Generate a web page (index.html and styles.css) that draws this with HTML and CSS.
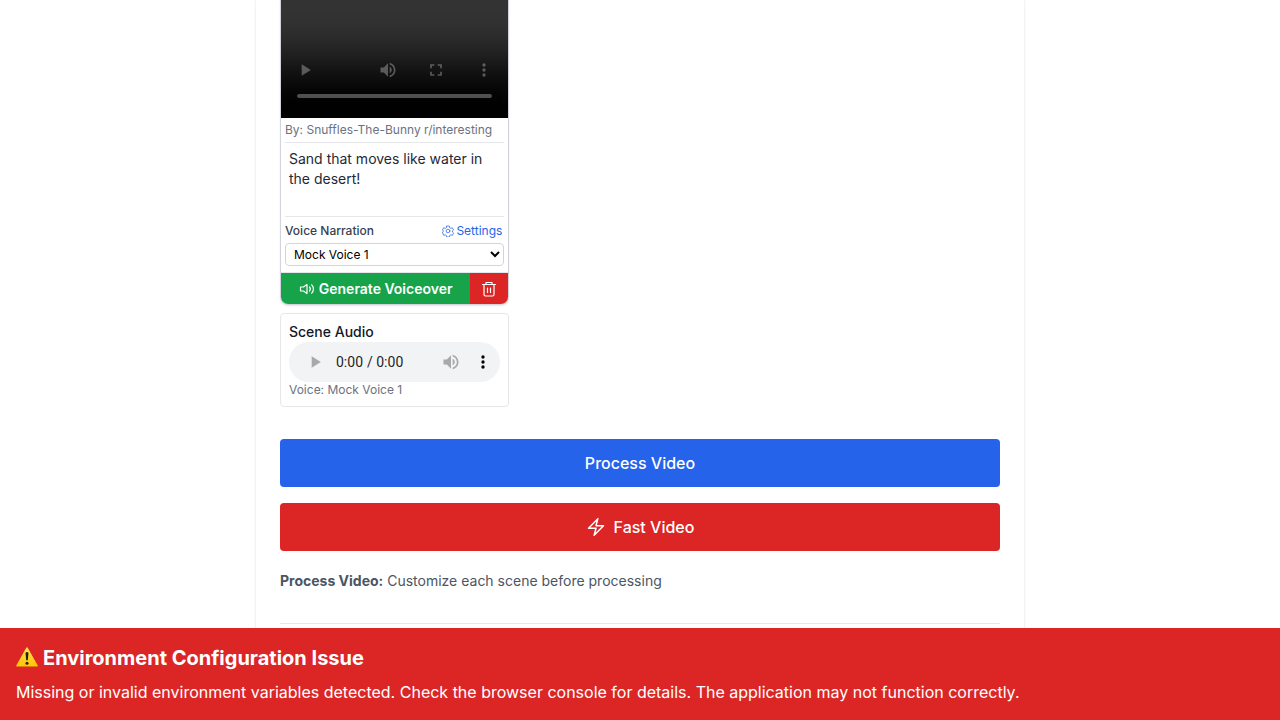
FILE: index.html
```html
<!DOCTYPE html>
<html lang="en">
<head>
<meta charset="utf-8">
<meta name="viewport" content="width=device-width, initial-scale=1">
<title>Video scenes</title>
<link rel="stylesheet" href="styles.css">
</head>
<body>
<main class="panel">
  <div class="scenes">
    <div class="scene">
      <article class="card">
        <div class="media"><video class="video" controls></video></div>
        <div class="credit">By: Snuffles-The-Bunny r/interesting</div>
        <textarea class="caption" aria-label="Scene text">Sand that moves like water in the desert!</textarea>
        <div class="voice">
          <div class="voice-head">
            <label for="voice">Voice Narration</label>
            <button class="settings" type="button">
              <svg class="icon-sm" viewBox="0 0 24 24" aria-hidden="true"><path d="M9.4 2h5.2l.7 3.2 2.2 1.3 3.1-1 2.6 4.5-2.4 2.2v-.4 2.2l2.4 2.2-2.6 4.5-3.1-1-2.2 1.3-.7 3.2H9.4l-.7-3.2-2.2-1.3-3.1 1L.8 14l2.4-2.2v.4L.8 10l2.6-4.5 3.1 1 2.2-1.3z"/><circle cx="12" cy="12" r="3.6"/></svg>
              Settings
            </button>
          </div>
          <select class="select" id="voice"><option>Mock Voice 1</option></select>
        </div>
        <div class="actions">
          <button class="generate" type="button">
            <svg class="icon" viewBox="0 0 16 16" aria-hidden="true"><path d="M8 3.5L4.500 6H1.500v4h3L8 12.500zM10.500 6a3 3 0 010 4M12.700 3.800a6 6 0 010 8.400"/></svg>
            Generate Voiceover
          </button>
          <button class="delete" type="button" aria-label="Delete scene">
            <svg class="icon" viewBox="0 0 16 16" aria-hidden="true"><path d="M1.500 3.500h13M5 3.500v-2h6v2M3 3.500v10q0 1.500 1.500 1.500h7q1.500 0 1.500-1.500v-10M6.500 7v4.500M9.500 7v4.500"/></svg>
          </button>
        </div>
      </article>
      <section class="audio-card">
        <h3 class="audio-title">Scene Audio</h3>
        <audio class="audio" controls></audio>
        <p class="audio-voice">Voice: Mock Voice 1</p>
      </section>
    </div>
  </div>
  <div class="process">
    <button class="wide blue" type="button">Process Video</button>
    <button class="wide red" type="button">
      <svg class="icon-lg" viewBox="0 0 24 24" aria-hidden="true"><path d="M3 13.500L14.250 2 12 10.500h9L9.750 22 12 13.500z"/></svg>
      Fast Video
    </button>
  </div>
  <p class="hint"><strong>Process Video:</strong> Customize each scene before processing</p>
  <hr class="rule">
</main>
<aside class="banner" role="alert">
  <h2 class="banner-title">
    <svg class="warning" viewBox="0 0 22 22" aria-hidden="true"><defs><linearGradient id="gold" x2="0" y2="1"><stop stop-color="#ffe34d"/><stop offset="1" stop-color="#ffc400"/></linearGradient></defs><path d="M10 1.200Q11-.5 12 1.200L21.700 18.500Q22 19.500 21 19.500H1Q0 19.500.3 18.500Z" fill="url(#gold)"/><path d="M9.500 5.700Q11 4.300 12.500 5.700L11.800 13.300H10.200Z" fill="#222"/><circle cx="11" cy="16.200" r="1.500" fill="#222"/></svg>
    Environment Configuration Issue
  </h2>
  <p class="banner-text">Missing or invalid environment variables detected. Check the browser console for details. The application may not function correctly.</p>
</aside>
</body>
</html>
```
FILE: styles.css
```css
* { box-sizing: border-box; }
body {
  margin: 0;
  background: #fff;
  color: #111827;
  font-family: Inter, "Liberation Sans", sans-serif;
  font-size: 16px;
  line-height: 24px;
}
h2, h3, p { margin: 0; }
button, select, textarea { font: inherit; color: inherit; }
button { border: 0; padding: 0; background: none; cursor: pointer; }
svg { flex: none; }
.icon, .icon-sm, .icon-lg {
  fill: none;
  stroke: currentColor;
  stroke-linecap: round;
  stroke-linejoin: round;
}
.icon { width: 16px; height: 16px; stroke-width: 1.2; }
.icon-sm { width: 12px; height: 12px; stroke-width: 1.5; }
.icon-lg { width: 20px; height: 20px; stroke-width: 1.8; }
.panel {
  max-width: 768px;
  margin: 0 auto;
  padding: 0 24px;
  box-shadow: 0 0 2px rgba(0, 0, 0, 0.15);
}
.scenes { display: grid; grid-template-columns: repeat(3, 1fr); gap: 16px; }
.card {
  border: 1px solid #d1d5db;
  border-top: 0;
  border-radius: 0 0 8px 8px;
  overflow: hidden;
  box-shadow: 0 1px 2px rgba(0, 0, 0, 0.1);
}
.media {
  display: flex;
  align-items: flex-end;
  height: 118px;
  overflow: hidden;
  background: #000;
}
.video { flex: none; width: 100%; height: 160px; background: #000; }
.credit {
  margin: 0 4px;
  padding: 4px 0;
  border-bottom: 1px solid #e5e7eb;
  color: #6b7280;
  font-size: 12px;
  line-height: 16px;
  white-space: nowrap;
}
.caption {
  display: block;
  width: 100%;
  height: 73px;
  border: 0;
  padding: 6px 8px;
  background: none;
  color: #1f2937;
  font-size: 14px;
  line-height: 20px;
  resize: none;
}
.voice {
  margin: 0 4px;
  padding: 6px 0;
  border-top: 1px solid #e5e7eb;
  font-size: 12px;
  line-height: 16px;
}
.voice-head {
  display: flex;
  justify-content: space-between;
  margin-bottom: 4px;
  padding-right: 2px;
  color: #374151;
  font-weight: 500;
}
.settings { display: flex; align-items: center; gap: 2px; color: #2563eb; font-weight: 400; }
.select {
  display: block;
  width: 100%;
  height: 23px;
  border: 1px solid #d1d5db;
  border-radius: 4px;
  padding: 0 4px;
  background: #fff;
  color: #000;
}
.actions {
  display: flex;
  border-top: 1px solid #e5e7eb;
  color: #fff;
  font-size: 14px;
  line-height: 20px;
}
.generate, .delete { display: flex; align-items: center; justify-content: center; height: 31px; }
.generate { flex: 1; gap: 4px; background: #16a34a; font-weight: 600; }
.delete { width: 38px; background: #dc2626; }
.audio-card {
  margin-top: 8px;
  border: 1px solid #e5e7eb;
  border-radius: 4px;
  padding: 8px;
}
.audio-title { font-size: 14px; line-height: 20px; font-weight: 500; }
.audio { display: block; width: 100%; height: 40px; }
.audio-voice { color: #6b7280; font-size: 12px; line-height: 16px; }
.process { display: grid; gap: 16px; margin-top: 32px; }
.wide {
  display: flex;
  align-items: center;
  justify-content: center;
  gap: 8px;
  height: 48px;
  border-radius: 4px;
  color: #fff;
  font-weight: 500;
}
.blue { background: #2563eb; }
.red { background: #dc2626; }
.hint { margin-top: 20px; color: #4b5563; font-size: 14px; line-height: 20px; }
.rule { margin: 32px 0 0; border: 0; border-top: 1px solid #e5e7eb; padding-bottom: 72px; }
.banner {
  position: fixed;
  right: 0;
  bottom: 0;
  left: 0;
  padding: 16px;
  background: #dc2626;
  color: #fff;
}
.banner-title {
  display: flex;
  align-items: center;
  gap: 5px;
  margin-bottom: 8px;
  font-size: 20px;
  line-height: 28px;
  font-weight: 700;
}
.warning { width: 22px; height: 22px; }
.banner-text { font-weight: 400; }
```
